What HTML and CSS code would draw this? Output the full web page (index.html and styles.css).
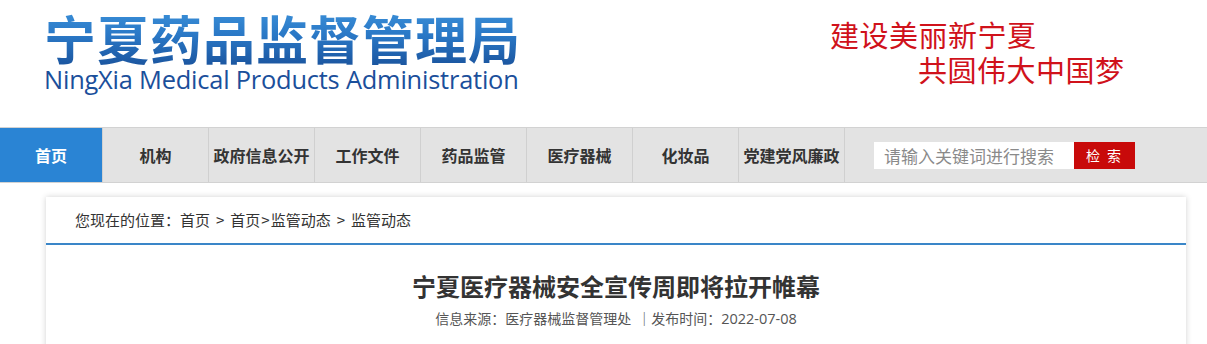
FILE: index.html
```html
<!DOCTYPE html>
<html lang="zh-CN">
<head>
<meta charset="utf-8">
<title>宁夏药品监督管理局</title>
<link rel="stylesheet" href="styles.css">
</head>
<body>
<header class="header">
  <div class="logo">
    <div class="logo-cn">宁夏药品监督管理局</div>
    <div class="logo-en">NingXia Medical Products Administration</div>
  </div>
  <div class="slogan">
    <div class="slogan-1">建设美丽新宁夏</div>
    <div class="slogan-2">共圆伟大中国梦</div>
  </div>
</header>
<nav class="nav">
  <a class="nav-item active first">首页</a>
  <a class="nav-item">机构</a>
  <a class="nav-item">政府信息公开</a>
  <a class="nav-item">工作文件</a>
  <a class="nav-item">药品监管</a>
  <a class="nav-item">医疗器械</a>
  <a class="nav-item">化妆品</a>
  <a class="nav-item">党建党风廉政</a>
  <div class="search">
    <div class="search-input">请输入关键词进行搜索</div>
    <div class="search-btn">检 索</div>
  </div>
</nav>
<main class="card">
  <div class="crumb">您现在的位置：首页<span class="gt sp">&gt;</span>首页<span class="gt">&gt;</span>监管动态<span class="gt sp">&gt;</span>监管动态</div>
  <h1 class="title">宁夏医疗器械安全宣传周即将拉开帷幕</h1>
  <div class="meta">信息来源：医疗器械监督管理处<span class="bar">｜</span>发布时间：<span class="date">2022-07-08</span></div>
</main>
</body>
</html>
```
FILE: styles.css
```css
* { box-sizing: border-box; }
html, body { margin: 0; padding: 0; background: #fff; }
body {
  font-family: "Noto Sans CJK SC", "Noto Sans", sans-serif;
  color: #333;
  overflow: hidden;
}
.header {
  height: 127px;
  display: flex;
}
.logo {
  padding: 10px 0 0 44px;
  width: 780px;
}
.logo-cn {
  font-size: 52px;
  font-weight: 700;
  line-height: 56px;
  letter-spacing: 1px;
  background: linear-gradient(180deg, #3a8fd8 0%, #2a78c6 45%, #1b559f 100%);
  -webkit-background-clip: text;
  background-clip: text;
  color: transparent;
  display: inline-block;
}
.logo-en {
  font-family: "Open Sans", "Noto Sans", sans-serif;
  font-size: 25.4px;
  line-height: 26px;
  color: #1b4f9b;
  letter-spacing: -0.2px;
}
.slogan {
  padding-top: 17px;
  margin-left: 50px;
  color: #d0121b;
  font-size: 29px;
  line-height: 35px;
}
.slogan-1 { letter-spacing: 0.5px; }
.slogan-2 { padding-left: 88px; letter-spacing: 0.5px; }

.nav {
  height: 56px;
  background: #e3e3e3;
  border-top: 1px solid #d2d2d2;
  border-bottom: 1px solid #d2d2d2;
  display: flex;
  align-items: stretch;
}
.nav-item {
  width: 106px;
  border-right: 1px solid #d0d0d0;
  display: flex;
  align-items: center;
  justify-content: center;
  font-size: 16px;
  font-weight: 700;
  color: #333;
}
.nav-item.first { width: 103px; }
.nav-item.active { background: #2a84d4; color: #fff; }
.search {
  display: flex;
  align-items: center;
  margin-left: 29px;
}
.search-input {
  width: 200px;
  height: 27px;
  background: #fff;
  color: #8a8a8a;
  font-size: 17px;
  line-height: 27px;
  padding-left: 10px;
  white-space: nowrap;
  overflow: hidden;
}
.search-btn {
  width: 61px;
  height: 27px;
  background: #c80a0a;
  color: #fff;
  font-size: 14px;
  line-height: 27px;
  text-align: center;
  letter-spacing: 2px;
}

.card {
  margin: 14px 0 0 46px;
  width: 1140px;
  height: 200px;
  background: #fff;
  box-shadow: 0 0 6px rgba(0,0,0,0.18);
}
.crumb {
  height: 48px;
  border-bottom: 2px solid #3a86c8;
  padding: 12px 0 0 29px;
  font-size: 15px;
  line-height: 22px;
  color: #333;
}
.gt { margin: 0 1px; }
.gt.sp { margin: 0 6px; }
.title {
  margin: 24px 0 0;
  text-align: center;
  font-size: 24px;
  line-height: 34px;
  font-weight: 700;
  color: #333;
}
.meta {
  margin-top: 5px;
  text-align: center;
  font-size: 14px;
  line-height: 20px;
  color: #555;
}
.bar { margin-left: 6px; }
.date { font-family: "Open Sans", "Noto Sans", sans-serif; font-size: 14.5px; }
```
